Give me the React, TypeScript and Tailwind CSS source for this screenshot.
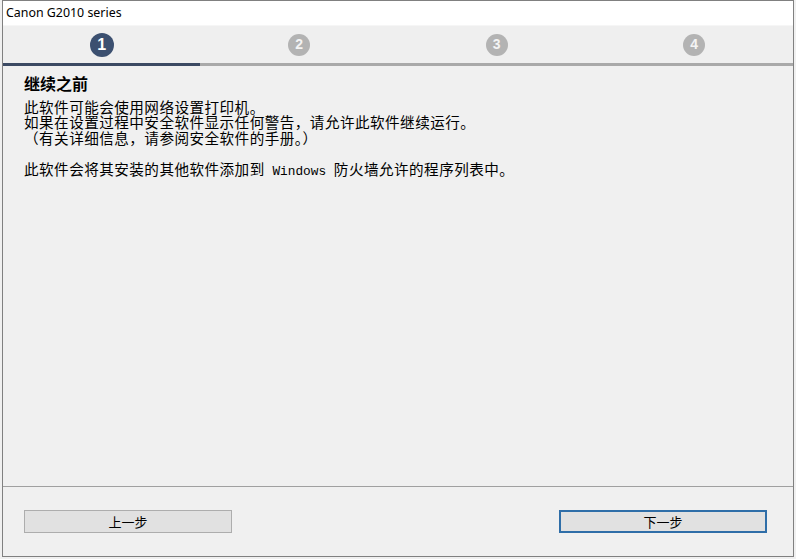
const STEPS = [1, 2, 3, 4];

const cjk = { fontFamily: '"Noto Sans CJK SC", sans-serif' };

const StepCircle = ({ n, active }: { n: number; active: boolean }) => (
  <div
    className={
      active
        ? 'w-[24px] h-[24px] rounded-full bg-[#3c5070] text-white flex items-center justify-center text-[16px] font-bold'
        : 'w-[22px] h-[22px] rounded-full bg-[#b3b3b3] text-[#f4f4f4] flex items-center justify-center text-[14px] font-bold'
    }
    style={{ fontFamily: '"Liberation Sans", Arial, sans-serif' }}
  >
    {n}
  </div>
);

const Button = ({ label, primary }: { label: string; primary?: boolean }) => (
  <button
    className={
      primary
        ? 'w-[208px] h-[23px] bg-[#e1e1e1] border-2 border-[#2f6ea8] text-[13px] text-black flex items-center justify-center'
        : 'w-[208px] h-[23px] bg-[#e1e1e1] border border-[#adadad] text-[13px] text-black flex items-center justify-center'
    }
    style={cjk}
  >
    {label}
  </button>
);

export default function App() {
  return (
    <div className="w-[796px] h-[559px] bg-[#f0f0f0] overflow-hidden">
      <div className="ml-[2px] w-[792px] h-[557px] border border-[#808080] flex flex-col bg-[#f0f0f0]">
        {/* title bar */}
        <div
          className="h-[24px] bg-white flex items-center pl-[3px] text-[12.4px] text-black"
          style={{ fontFamily: '"Noto Sans", "Open Sans", sans-serif' }}
        >
          Canon G2010 series
        </div>

        {/* steps */}
        <div className="h-[38px] grid grid-cols-4 bg-[#efefef] border-t border-[#f6f6f6]">
          {STEPS.map((n) => (
            <div key={n} className="flex items-center justify-center">
              <StepCircle n={n} active={n === 1} />
            </div>
          ))}
        </div>
        <div className="h-[3px] flex">
          <div className="w-[197px] bg-[#3c4a63]" />
          <div className="flex-1 bg-[#a9a9a9]" />
        </div>

        {/* content */}
        <div className="flex-1 pl-[21px] pt-[7px] text-black" style={cjk}>
          <h1 className="text-[16px] font-bold leading-[20px]">继续之前</h1>
          <div className="mt-[6px] text-[14.6px] tracking-[0.45px] leading-[15.4px]">
            <p>此软件可能会使用网络设置打印机。</p>
            <p>如果在设置过程中安全软件显示任何警告，请允许此软件继续运行。</p>
            <p>（有关详细信息，请参阅安全软件的手册。）</p>
            <p className="mt-[15.4px]">
              此软件会将其安装的其他软件添加到
              <span
                className="text-[12.8px] tracking-normal"
                style={{ fontFamily: '"Liberation Mono", monospace' }}
              >
                {' '}Windows{' '}
              </span>
              防火墙允许的程序列表中。
            </p>
          </div>
        </div>

        {/* footer */}
        <div className="h-[70px] border-t border-[#a0a0a0] flex items-start justify-between pt-[23px] pl-[21px] pr-[26px]">
          <Button label="上一步" />
          <Button label="下一步" primary />
        </div>
      </div>
    </div>
  );
}
